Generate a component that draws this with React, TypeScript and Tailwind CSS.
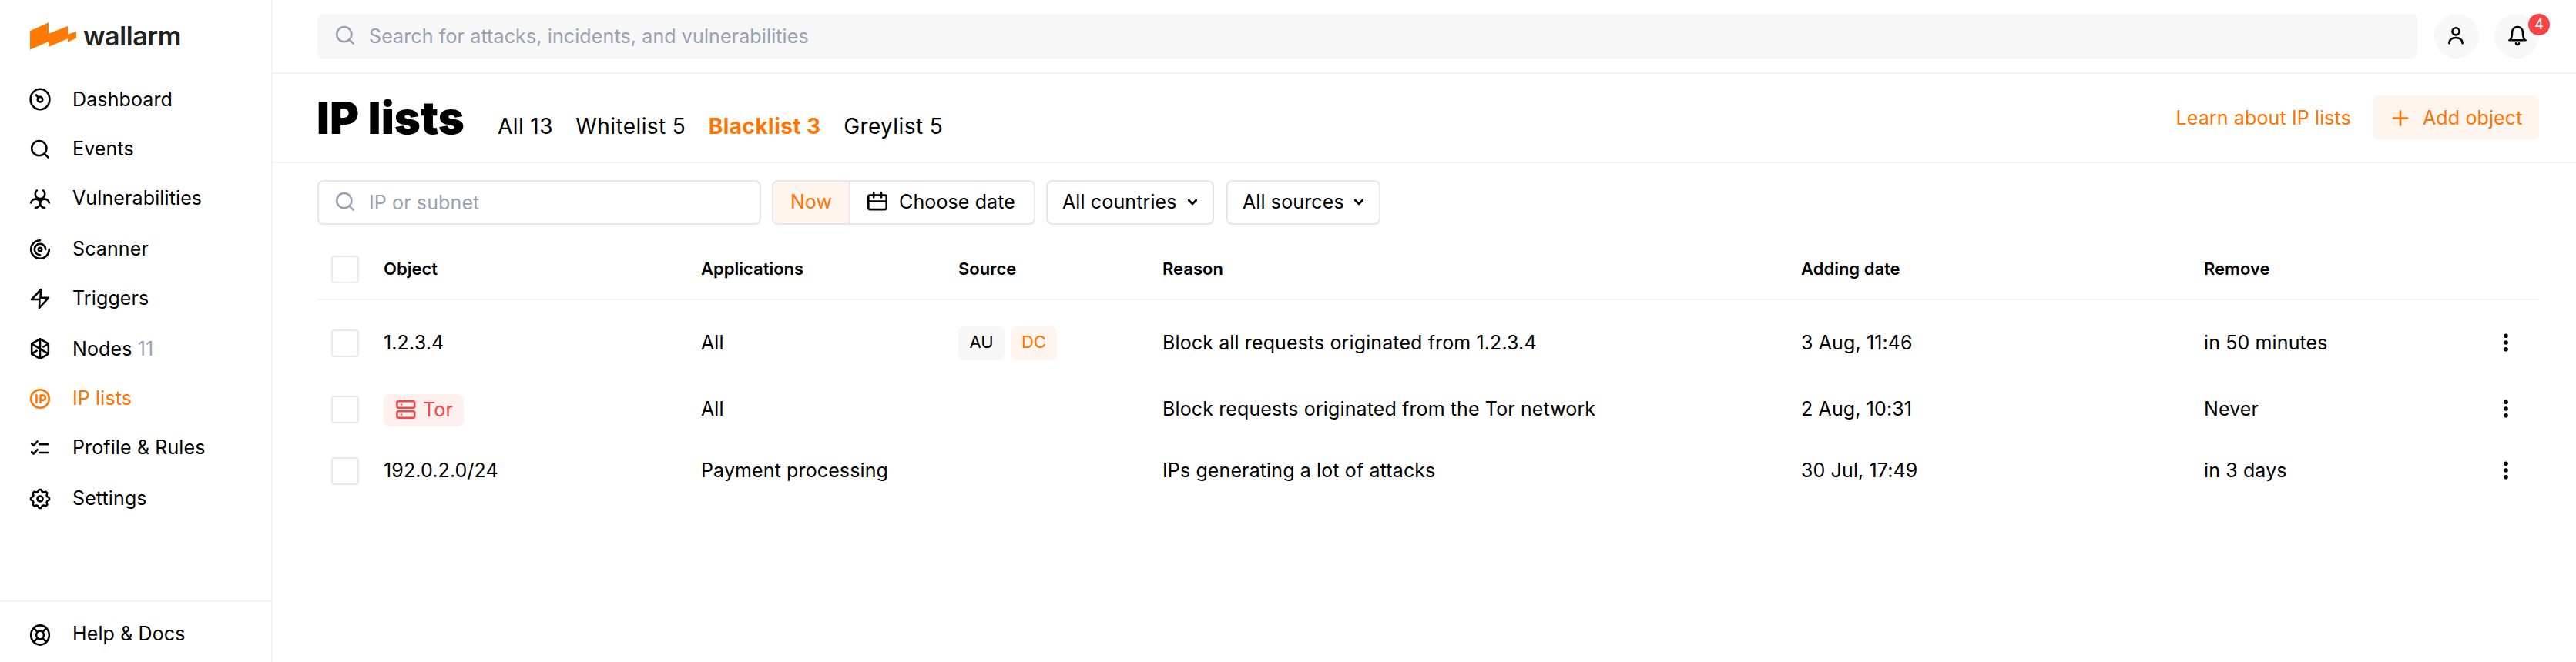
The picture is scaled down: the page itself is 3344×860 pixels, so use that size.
import type { ReactNode } from "react";

function Icon({ size = 32, className = "", strokeWidth = 2.6, children }: { size?: number; className?: string; strokeWidth?: number; children: ReactNode }) {
  return (
    <svg
      width={size}
      height={size}
      viewBox={`0 0 ${size} ${size}`}
      fill="none"
      stroke="currentColor"
      strokeWidth={strokeWidth}
      strokeLinecap="round"
      strokeLinejoin="round"
      className={`shrink-0 ${className}`}
    >
      {children}
    </svg>
  );
}

function SearchGlyph() {
  return (
    <>
      <circle cx="14.8" cy="15.6" r="9.6" />
      <path d="M21.8 22.8l4.8 4.8" />
    </>
  );
}

const gearPoints = Array.from({ length: 8 }, (_, i) => {
  const at = (deg: number, r: number) => {
    const a = ((deg - 90) * Math.PI) / 180;
    return `${(16 + r * Math.cos(a)).toFixed(2)} ${(17 + r * Math.sin(a)).toFixed(2)}`;
  };
  const d = i * 45;
  return `${i === 0 ? "M" : "L"}${at(d - 6, 12)}L${at(d + 6, 12)}L${at(d + 17, 9.7)}L${at(d + 28, 9.7)}`;
}).join("") + "Z";

type Item = { label: string; count?: number; active?: boolean; gap?: boolean; icon: ReactNode };

const items: Item[] = [
  {
    label: "Dashboard",
    icon: (
      <>
        <ellipse cx="16" cy="16" rx="12.4" ry="13.3" />
        <circle cx="16" cy="16.2" r="3.3" />
        <path d="M11 10.5l2.8 3" />
      </>
    ),
  },
  { label: "Events", icon: <SearchGlyph /> },
  {
    label: "Vulnerabilities",
    icon: (
      <>
        <path d="M11.8 6.4a6.2 6.2 0 1 0 8.4 0" />
        <path d="M4.2 22.4a6 6 0 0 1 11.8 .3a6 6 0 0 1-6 6.2" />
        <path d="M27.8 22.4a6 6 0 0 0-11.8 .3a6 6 0 0 0 6 6.2" />
        <path d="M16 17.5v5" />
      </>
    ),
  },
  {
    label: "Scanner",
    gap: true,
    icon: (
      <>
        <path d="M16 5.2a11.8 11.8 0 1 0 11.8 11.8" />
        <path d="M23.2 17a7.2 7.2 0 1 0-7.2 7.2" />
        <circle cx="16" cy="17" r="2.2" />
      </>
    ),
  },
  { label: "Triggers", icon: <path d="M17.2 5L5 18h10.4L15 29l12-13.2H16.4z" /> },
  {
    label: "Nodes",
    count: 11,
    gap: true,
    icon: (
      <>
        <path d="M16 3.4l10.8 6v13.4l-10.8 6l-10.8-6v-13.4z" />
        <path d="M16 3.4v25.4M5.2 9.6l21.6 13M26.8 9.6l-6.4 3.9M5.2 22.6l6.4-3.9" />
      </>
    ),
  },
  {
    label: "IP lists",
    active: true,
    icon: (
      <>
        <circle cx="16" cy="17" r="11.8" />
        <path d="M11.4 12.4v9.6" />
        <path d="M16.6 22v-9.4h3.2a3.1 3.1 0 0 1 0 6.2h-3.2" />
      </>
    ),
  },
  {
    label: "Profile & Rules",
    icon: <path d="M5.2 11.4l2.4 2.3l5-5.4M15.4 12.2h11.2M5.2 22.2l2.4 2.3l5-5.4M15.4 23h11.2" />,
  },
  {
    label: "Settings",
    gap: true,
    icon: (
      <>
        <path d={gearPoints} />
        <circle cx="16" cy="17" r="3.5" />
      </>
    ),
  },
];

const help: Item = {
  label: "Help & Docs",
  icon: (
    <>
      <ellipse cx="16" cy="18" rx="11.8" ry="12.6" />
      <ellipse cx="16" cy="18" rx="4.9" ry="5.2" />
      <path d="M8 9l4.5 5M24 9l-4.5 5M8 27l4.5-5M24 27l-4.5-5" />
    </>
  ),
};

function NavItem({ item }: { item: Item }) {
  return (
    <a className={`flex h-16 items-center gap-[26px] pl-9 ${item.gap ? "mt-0.5" : ""} ${item.active ? "text-[#ff7300]" : "text-black"}`}>
      <Icon>{item.icon}</Icon>
      <span>
        {item.label}
        {item.count !== undefined && <span className="text-[#9aa3b5]"> {item.count}</span>}
      </span>
    </a>
  );
}

function Sidebar() {
  return (
    <aside className="flex w-[354px] shrink-0 flex-col border-r-2 border-[#f3f3f4]">
      <div className="flex h-[97px] items-start gap-[9px] pl-[39px] pt-[29px]">
        <svg width="60" height="36" viewBox="0 0 60 36" className="shrink-0">
          <path fill="#ff7a05" d="M0 11.3L24 0.3V14.7L49 5V15.5L60 12V20.5L49 25.7V21.3L24 32V25L0 35.7z" />
        </svg>
        <span className="text-[34px] font-semibold leading-[35px] tracking-[-0.4px] text-[#222]">wallarm</span>
      </div>
      <nav className="grow">
        {items.map((item) => (
          <NavItem key={item.label} item={item} />
        ))}
      </nav>
      <div className="h-20 border-t-2 border-[#f3f3f4] pt-[9px]">
        <NavItem item={help} />
      </div>
    </aside>
  );
}

function TopBar() {
  return (
    <div className="flex h-24 items-start border-b-2 border-[#f3f3f4] pl-[58px] pr-12 pt-[18px]">
      <div className="flex h-[58px] grow items-center gap-[15px] rounded-lg bg-[#f7f7f7] pl-5 text-[#98a1b3]">
        <Icon className="-mt-1">
          <SearchGlyph />
        </Icon>
        <span>Search for attacks, incidents, and vulnerabilities</span>
      </div>
      <button className="ml-[22px] size-[58px] rounded-full bg-[#f7f7f7]">
        <Icon size={58}>
          <circle cx="28" cy="22.8" r="4.6" />
          <path d="M19.4 38.2c0-9.6 17.2-9.6 17.2 0" />
        </Icon>
      </button>
      <button className="relative ml-5 size-[58px] rounded-full bg-[#f7f7f7]">
        <Icon size={58}>
          <path d="M19.4 34.2h21.2M20.4 34c2-2.2 2.6-4.6 2.6-9.4c0-10 14-10 14 0c0 4.8 .6 7.2 2.6 9.4" />
          <path d="M28 38.4c.4 2.2 3.6 2.2 4 0" />
        </Icon>
        <span className="absolute -right-3.5 top-0 flex size-7 items-center justify-center rounded-full bg-[#f54545] text-lg tracking-normal text-white">4</span>
      </button>
    </div>
  );
}

const tabs = [
  { label: "All 13" },
  { label: "Whitelist 5" },
  { label: "Blacklist 3", active: true },
  { label: "Greylist 5" },
];

function Header() {
  return (
    <header className="flex h-[116px] items-start border-b-2 border-[#f3f3f4] pl-[57px] pr-12 pt-7">
      <div className="flex items-baseline">
        <h1 className="w-[235px] text-[58px] font-black leading-[58px] tracking-normal">IP lists</h1>
        <div className="flex gap-[29.5px] text-[28px] leading-9 tracking-[0.4px]">
          {tabs.map((t) => (
            <span key={t.label} className={t.active ? "font-bold tracking-[0.45px] text-[#ff7300]" : ""}>
              {t.label}
            </span>
          ))}
        </div>
      </div>
      <div className="ml-auto flex items-center text-[#ff7300]">
        <a className="mr-7">Learn about IP lists</a>
        <button className="flex h-[58px] w-[216px] items-center gap-[13px] rounded-lg bg-[#fff4ee] pl-5">
          <Icon>
            <path d="M16 7.5v18M7 16.5h18" />
          </Icon>
          <span>Add object</span>
        </button>
      </div>
    </header>
  );
}

function Dropdown({ label, className }: { label: string; className: string }) {
  return (
    <button className={`flex h-[58px] items-center justify-between rounded-lg border-2 border-[#e5e6eb] pl-[19px] pr-[19px] ${className}`}>
      <span className="-mt-[3px]">{label}</span>
      <Icon size={14}>
        <path d="M2.2 4l4.8 5l4.8-5" />
      </Icon>
    </button>
  );
}

function Filters() {
  return (
    <div className="flex pt-[22px]">
      <div className="mr-3.5 flex h-[58px] w-[576px] items-center gap-[15px] rounded-lg border-2 border-[#e5e6eb] pl-[18px] text-[#98a1b3]">
        <Icon className="-mt-1">
          <SearchGlyph />
        </Icon>
        <span>IP or subnet</span>
      </div>
      <div className="mr-3.5 flex h-[58px] w-[342px] overflow-hidden rounded-lg border-2 border-[#e5e6eb]">
        <div className="flex w-[100px] items-center justify-center border-r-2 border-[#e5e6eb] bg-[#fff4ee] pb-[3px] text-[#ff7300]">Now</div>
        <div className="flex items-center gap-[13px] pb-[3px] pl-[18px]">
          <Icon className="mt-[3px]">
            <rect x="5.3" y="6.5" width="23.4" height="18.6" rx="2" />
            <path d="M5.3 14.5h23.4M12.2 3v6.500M22 3v6.500" />
          </Icon>
          <span>Choose date</span>
        </div>
      </div>
      <Dropdown label="All countries" className="mr-4 w-[218px]" />
      <Dropdown label="All sources" className="w-[200px]" />
    </div>
  );
}

function Checkbox() {
  return <div className="ml-[18px] size-9 rounded-[4px] border-2 border-[#e9e9ee]" />;
}

function Tag({ label, className }: { label: string; className: string }) {
  return <span className={`flex h-11 w-[60px] items-center justify-center rounded-lg pb-1 text-[22px] tracking-normal ${className}`}>{label}</span>;
}

function TorTag() {
  return (
    <span className="mt-0.5 flex h-[42px] w-[104px] items-center rounded-lg bg-[#fff0f0] pl-[15px] text-[#f54545]">
      <Icon size={28} className="-mt-0.5">
        <rect x="2.4" y="3.3" width="22.8" height="8.4" rx="2" />
        <rect x="2.4" y="16.3" width="22.8" height="8.4" rx="2" />
        <path d="M8 7.6h.1M8 20.6h.1" />
      </Icon>
      <span className="ml-2 pb-[3px]">Tor</span>
    </span>
  );
}

const GRID = "grid grid-cols-[86px_412px_334px_265px_829px_523px_1fr] items-center";

const rows = [
  {
    height: "h-[76px]",
    object: <span className="-mt-0.5">1.2.3.4</span>,
    apps: "All",
    source: (
      <div className="flex gap-2">
        <Tag label="AU" className="bg-[#f7f7f7] text-black" />
        <Tag label="DC" className="bg-[#fff4ee] text-[#ff7300]" />
      </div>
    ),
    reason: "Block all requests originated from 1.2.3.4",
    added: "3 Aug, 11:46",
    remove: "in 50 minutes",
  },
  {
    height: "h-24",
    object: <TorTag />,
    apps: "All",
    source: null,
    reason: "Block requests originated from the Tor network",
    added: "2 Aug, 10:31",
    remove: "Never",
  },
  {
    height: "h-16",
    object: <span className="-mt-0.5">192.0.2.0/24</span>,
    apps: "Payment processing",
    source: null,
    reason: "IPs generating a lot of attacks",
    added: "30 Jul, 17:49",
    remove: "in 3 days",
  },
];

const headings = ["Object", "Applications", "Source", "Reason", "Adding date", "Remove"];

function Table() {
  return (
    <div className="mt-5">
      <div className={`${GRID} h-[78px] border-b-2 border-[#f3f3f4] text-[22px] font-semibold tracking-normal`}>
        <Checkbox />
        {headings.map((h) => (
          <span key={h} className="-mt-[3px]">
            {h}
          </span>
        ))}
      </div>
      <div className="pt-[18px]">
        {rows.map((r) => (
          <div key={r.reason} className={`${GRID} ${r.height}`}>
            <Checkbox />
            {r.object}
            <span className="-mt-0.5">{r.apps}</span>
            <div>{r.source}</div>
            <span className="-mt-0.5">{r.reason}</span>
            <span className="-mt-0.5">{r.added}</span>
            <div className="-mt-0.5 flex items-center justify-between pr-[29px]">
              <span>{r.remove}</span>
              <svg width="28" height="28" viewBox="0 0 28 28">
                <circle cx="14" cy="5.2" r="2.8" />
                <circle cx="14" cy="14" r="2.8" />
                <circle cx="14" cy="22.8" r="2.8" />
              </svg>
            </div>
          </div>
        ))}
      </div>
    </div>
  );
}

export default function App() {
  return (
    <div className="flex h-[860px] w-[3344px] overflow-hidden bg-white font-[Inter,sans-serif] text-[25px] leading-8 tracking-[0.12px] text-black">
      <Sidebar />
      <main className="flex grow flex-col">
        <TopBar />
        <Header />
        <div className="pl-[58px] pr-12">
          <Filters />
          <Table />
        </div>
      </main>
    </div>
  );
}
